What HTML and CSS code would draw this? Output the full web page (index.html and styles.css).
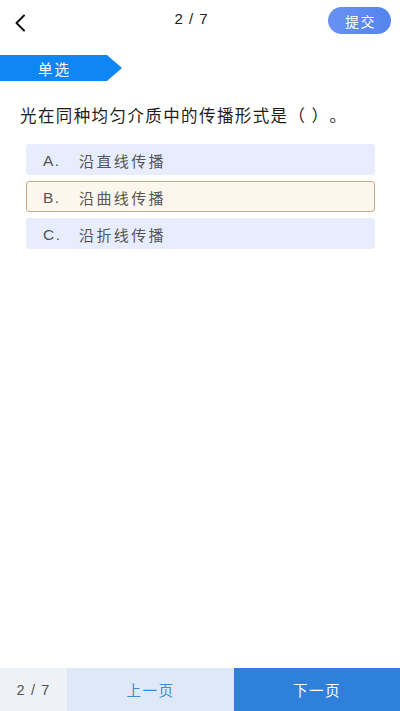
FILE: index.html
```html
<!DOCTYPE html>
<html lang="zh-CN">
<head>
<meta charset="utf-8">
<title>单选</title>
<link rel="stylesheet" href="styles.css">
</head>
<body>
<div class="page">
  <header class="topbar">
    <button class="back" aria-label="返回">
      <svg width="14" height="18" viewBox="0 0 14 18"><polyline points="11,1.5 3.5,9 11,16.5" fill="none" stroke="#111" stroke-width="2" stroke-linecap="round" stroke-linejoin="round"/></svg>
    </button>
    <div class="title">2 / 7</div>
    <button class="submit">提交</button>
  </header>

  <div class="tag"><span>单选</span></div>

  <p class="question">光在同种均匀介质中的传播形式是（ ）。</p>

  <ul class="options">
    <li class="option"><span class="label">A.</span><span class="text">沿直线传播</span></li>
    <li class="option selected"><span class="label">B.</span><span class="text">沿曲线传播</span></li>
    <li class="option"><span class="label">C.</span><span class="text">沿折线传播</span></li>
  </ul>
</div>

<footer class="bottombar">
  <div class="count">2 / 7</div>
  <div class="prev">上一页</div>
  <div class="next">下一页</div>
</footer>
</body>
</html>
```

FILE: styles.css
```css
* { box-sizing: border-box; }
html, body {
  margin: 0;
  padding: 0;
  background: #fff;
  font-family: "Liberation Sans", "Noto Sans CJK SC", sans-serif;
}
.page {
  height: 711px;
}
.topbar {
  display: flex;
  align-items: center;
  justify-content: space-between;
  height: 41px;
  padding: 7px 9px 7px 10px;
}
.back {
  width: 20px;
  height: 27px;
  padding: 0;
  border: 0;
  background: none;
  display: flex;
  align-items: center;
  justify-content: center;
  margin-top: 5px;
}
.title {
  font-size: 15px;
  letter-spacing: 1px;
  color: #222;
  margin-left: 25px;
  margin-top: -4px;
}
.submit {
  width: 63px;
  height: 27px;
  border: 0;
  border-radius: 14px;
  background: linear-gradient(90deg, #6a91f2, #5384ef);
  color: #fff;
  font-family: "Noto Sans CJK SC", sans-serif;
  font-size: 14px;
  letter-spacing: 1.5px;
  padding: 0 0 0 2px;
}
.tag {
  margin-top: 14px;
  width: 122px;
  height: 26px;
  background: #0e86f4;
  clip-path: polygon(0 0, 107px 0, 122px 50%, 107px 100%, 0 100%);
  display: flex;
  align-items: center;
  padding-right: 15px;
}
.tag span {
  flex: 1;
  text-align: center;
  color: #fff;
  font-family: "Noto Sans CJK SC", sans-serif;
  font-size: 14.5px;
  letter-spacing: 2px;
  padding-left: 2px;
}
.question {
  margin: 22px 0 0;
  padding-left: 20px;
  font-family: "Noto Sans CJK SC", sans-serif;
  font-size: 16.5px;
  line-height: 24px;
  letter-spacing: 1.4px;
  color: #1e1e1e;
  text-spacing-trim: space-all;
  font-feature-settings: "halt" 0, "chws" 0;
}
.options {
  list-style: none;
  margin: 17px 25px 0 26px;
  padding: 0;
  display: flex;
  flex-direction: column;
  gap: 6px;
}
.option {
  height: 31px;
  display: flex;
  align-items: center;
  padding-left: 16px;
  background: #e7edfc;
  border: 1px solid #e7edfc;
  border-radius: 3px;
  color: #555;
  font-size: 15px;
}
.option.selected {
  background: #fdf6ec;
  border-color: #c6ab83;
}
.label {
  width: 36px;
  font-size: 15.5px;
  letter-spacing: 1.5px;
  padding-top: 2px;
}
.text {
  font-family: "Noto Sans CJK SC", sans-serif;
  letter-spacing: 2.4px;
  padding-top: 2px;
}
.bottombar {
  position: fixed;
  left: 0;
  right: 0;
  bottom: 0;
  height: 43px;
  display: flex;
}
.bottombar > div {
  display: flex;
  align-items: center;
  justify-content: center;
  font-size: 14.5px;
}
.count {
  width: 67px;
  background: #eef1f5;
  color: #555;
  letter-spacing: 1.2px;
}
.prev {
  width: 167px;
  background: #dde9f6;
  color: #3c8ad8;
  font-family: "Noto Sans CJK SC", sans-serif;
  letter-spacing: 1.5px;
}
.next {
  flex: 1;
  background: #2f80da;
  color: #fff;
  font-family: "Noto Sans CJK SC", sans-serif;
  letter-spacing: 1.5px;
}
```
